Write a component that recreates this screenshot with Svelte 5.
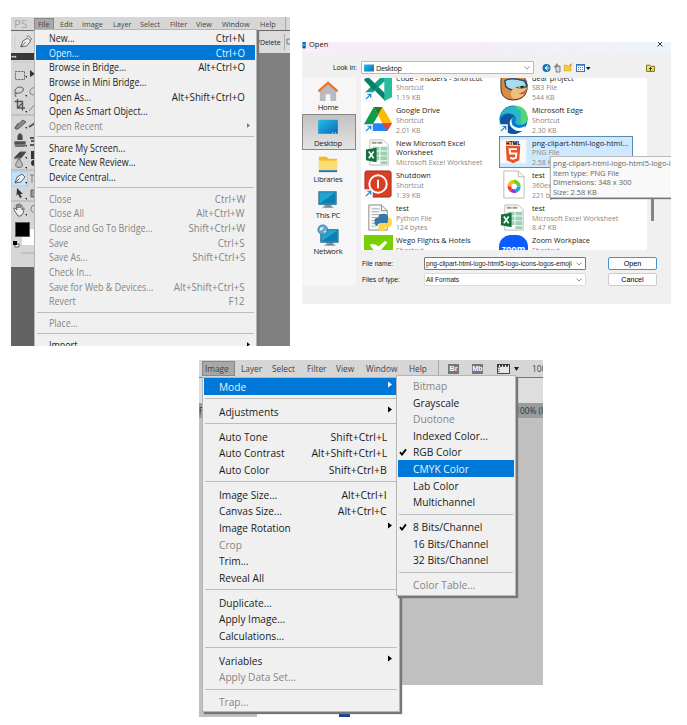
<script>
  const fileMenu = [
    ['New...', 'Ctrl+N'], ['Open...', 'Ctrl+O', 'hot'], ['Browse in Bridge...', 'Alt+Ctrl+O'],
    ['Browse in Mini Bridge...', ''], ['Open As...', 'Alt+Shift+Ctrl+O'],
    ['Open As Smart Object...', ''], ['Open Recent', '>', 'off'], null,
    ['Share My Screen...', ''], ['Create New Review...', ''], ['Device Central...', ''], null,
    ['Close', 'Ctrl+W', 'off'], ['Close All', 'Alt+Ctrl+W', 'off'],
    ['Close and Go To Bridge...', 'Shift+Ctrl+W', 'off'], ['Save', 'Ctrl+S', 'off'],
    ['Save As...', 'Shift+Ctrl+S', 'off'], ['Check In...', '', 'off'],
    ['Save for Web & Devices...', 'Alt+Shift+Ctrl+S', 'off'], ['Revert', 'F12', 'off'], null,
    ['Place...', '', 'off'], null, ['Import', '>']
  ];
  const imageMenu = [
    ['Mode', '>', 'hot'], null, ['Adjustments', '>'], null,
    ['Auto Tone', 'Shift+Ctrl+L'], ['Auto Contrast', 'Alt+Shift+Ctrl+L'], ['Auto Color', 'Shift+Ctrl+B'], null,
    ['Image Size...', 'Alt+Ctrl+I'], ['Canvas Size...', 'Alt+Ctrl+C'], ['Image Rotation', '>'],
    ['Crop', '', 'off'], ['Trim...', ''], ['Reveal All', ''], null,
    ['Duplicate...', ''], ['Apply Image...', ''], ['Calculations...', ''], null,
    ['Variables', '>'], ['Apply Data Set...', '', 'off'], null, ['Trap...', '', 'off']
  ];
  const modeMenu = [
    ['Bitmap', '', 'off'], ['Grayscale', ''], ['Duotone', '', 'off'], ['Indexed Color...', ''],
    ['RGB Color', '', 'checked'], ['CMYK Color', '', 'hot'], ['Lab Color', ''], ['Multichannel', ''], null,
    ['8 Bits/Channel', '', 'checked'], ['16 Bits/Channel', ''], ['32 Bits/Channel', ''], null,
    ['Color Table...', '', 'off']
  ];
  const left = [
    ['vscode', 'Code - Insiders - Shortcut', 'Shortcut', '1.19 KB'],
    ['drive', 'Google Drive', 'Shortcut', '2.01 KB'],
    ['excel', 'New Microsoft Excel', 'Worksheet', 'Microsoft Excel Worksheet'],
    ['power', 'Shutdown', 'Shortcut', '1.39 KB'],
    ['python', 'test', 'Python File', '124 bytes'],
    ['wego', 'Wego Flights & Hotels', 'Shortcut', '']
  ];
  const right = [
    ['bear', 'dear project', 'SB3 File', '544 KB'],
    ['edge', 'Microsoft Edge', 'Shortcut', '2.30 KB'],
    ['html', 'png-clipart-html-logo-html...', 'PNG File', '2.58 KB'],
    ['ring', 'test', '360extension', '221 bytes'],
    ['excel', 'test', 'Microsoft Excel Worksheet', '8.47 KB'],
    ['zoom', 'Zoom Workplace', 'Shortcut', '']
  ];
  const places = ['Home', 'Desktop', 'Libraries', 'This PC', 'Network'];
</script>

{#snippet menu(items)}
  {#each items as item}
    {#if item}
      <div class="item {item[2] ?? ''}">
        {#if item[2] === 'checked'}
          <svg class="check" viewBox="0 0 8 8"><path d="M1 4.2 3 6.6 7 1.4" /></svg>
        {/if}
        <span class="label">{item[0]}</span>
        {#if item[1] === '>'}
          <svg class="arrow" viewBox="0 0 4 6"><path d="M0 0 4 3 0 6z" /></svg>
        {:else}
          <span class="key">{item[1]}</span>
        {/if}
      </div>
    {:else}
      <div class="sep"></div>
    {/if}
  {/each}
{/snippet}

{#snippet link()}
  <rect x="0" y="20" width="9" height="9" fill="#fff" stroke="#ddd" stroke-width=".5" />
  <path d="M2 27 7 22M3.5 22H7v3.5" fill="none" stroke="#1683d8" stroke-width="1.2" />
{/snippet}

{#snippet fileIcon(kind)}
  <svg class="ficon" viewBox="0 0 30 30">
    {#if kind === 'vscode'}
      <path d="M0 7 4 4 25 24 22 29z" fill="#087f68" /><path d="M0 21 4 25 24 6 22 0z" fill="#10a384" />
      <path d="M0 7 4 4 14 14 10 18z" fill="#087f68" />
      <path d="M21 0 29 3V25L21 29z" fill="#27bda0" />{@render link()}
    {:else if kind === 'drive'}
      <path d="M10 2 0 20 5 27 15 10z" fill="#0a9d4b" /><path d="M10 2H19L29 19H19z" fill="#ffba00" />
      <path d="M10 2H19L14.500 10z" fill="#188038" />
      <path d="M10 19H29L24 27H5z" fill="#2684fc" /><path d="M19 19H29L24 27z" fill="#ea4335" />{@render link()}
    {:else if kind === 'excel'}
      <path d="M6 2H20L25 7V28H6z" fill="#fff" stroke="#bbb" />
      <path d="M8 4h5v2H8zM14 4h5v2h-5z" fill="#999" />
      <path d="M9 9h7v4H9zM17 9h7v4h-7zM9 14h7v4H9zM17 14h7v4h-7zM9 19h7v4H9zM17 19h7v4h-7zM17 24h7v3h-7z" fill="#9bd0b1" />
      <path d="M2 12 13 10V25L2 23z" fill="#14713f" />
      <path d="M5 14 10 21M10 14 5 21" stroke="#fff" stroke-width="1.7" />
    {:else if kind === 'power'}
      <rect x="1" y="1" width="27" height="27" rx="2" fill="#d83e24" stroke="#a62d1d" />
      <circle cx="14.5" cy="14.5" r="9" fill="none" stroke="#fff" stroke-width="2" />
      <path d="M14.5 10V19" stroke="#fff" stroke-width="2" />{@render link()}
    {:else if kind === 'python'}
      <path d="M5 2H18L24 8V28H5z" fill="#f8f8f8" stroke="#888" /><path d="M18 2V8H24" fill="none" stroke="#888" />
      <path d="M8 6h8M8 9h8M8 12h10M8 15h6M8 18h4M8 21h4M8 24h4" stroke="#aaa" />
      <path d="M15 14q0-3 5-3t5 3v5q0 2-3 2h-5q-3 0-3 3-4-1-3-6 0-3 4-3z" fill="#3676a8" />
      <path d="M25 15q4 0 4 5t-4 5h-3v3q-4 2-7 0v-4q0-3 4-3h4q2 0 2-2z" fill="#ffd64b" />
    {:else if kind === 'wego'}
      <rect width="30" height="30" fill="#78d000" /><path d="M6 10q5-2 9 2l7-6 2 2-6 7q0 5-3 8l-4-7q-3-2-5-6z" fill="#fff" />
    {:else if kind === 'bear'}
      <path d="M2 8q0-7 6-5 10-6 17 1 5 4 4 13-2 11-15 11Q1 27 2 14z" fill="#d98d43" stroke="#442b22" />
      <path d="M6 8q6-4 20 0l3 5q-5 5-10 2-6 5-12-1z" fill="#a9ddec" stroke="#284f72" stroke-width="1.5" />
      <path d="M15 15q9 2 14 0-2 11-13 12-7-4-1-12z" fill="#efbf80" /><path d="M20 21q6 0 8-5-1 8-8 5z" fill="#df2826" />
      <path d="m21 14 5-1-2 3z" fill="#171717" />
    {:else if kind === 'edge'}
      <circle cx="15" cy="15" r="14.5" fill="#087dca" />
      <path d="M1 12C4-2 29-3 29.500 14c0 7-10 9-13 4 5-9-9-13-15.500-6z" fill="#28b9c8" />
      <path d="M15 1q14-1 14.500 13 0 6-7 6V7q-2-4-7.500-6z" fill="#55d675" />
      <path d="M2 14q7-9 14-2-7 5-4 10 4 7 13 4Q14 34 5 26 0 20 2 14z" fill="#12539e" />
      <path d="M16 12q-5 3-2 9 5 5 13 1l-1 4q-9 3-14-4-3-6 4-10z" fill="#fff" />{@render link()}
    {:else if kind === 'html'}
      <rect x="1" y="2" width="27" height="24" fill="#fafafa" stroke="#eee" />
      <text x="14.500" y="7" text-anchor="middle" font-size="5" font-weight="900" fill="#111">HTML</text>
      <path d="M7 8H22L21 23 14.500 26 8 23z" fill="#e95325" />
      <path d="M18.500 11.500H11L11.500 16H18L17.500 20.500 14.500 21.500 11.500 20.500" fill="none" stroke="#fff" stroke-width="2" />
    {:else if kind === 'ring'}
      <path d="M5 1H20L26 7V29H5z" fill="#fff" stroke="#bbb" /><path d="M20 1V7H26" fill="none" stroke="#bbb" />
      <g fill="none" stroke-width="3.800"><path d="M10.700 17a5 5 0 0 1 5-5" stroke="#ffb900" /><path d="M15.500 12a5 5 0 0 1 5 5" stroke="#71ce25" /><path d="M20.500 17a5 5 0 0 1-3 4.500" stroke="#18a9df" /><path d="M17.500 21.500a5 5 0 0 1-5-.7" stroke="#a02de2" /><path d="M12.500 20.800a5 5 0 0 1-1.800-4" stroke="#f33542" /></g>
    {:else}
      <rect y="0" width="30" height="36" rx="12" fill="#0b5cff" />
      <text x="15" y="18" text-anchor="middle" font-size="9" font-weight="700" fill="#fff">zoom</text>
    {/if}
  </svg>
{/snippet}

{#snippet desk()}
  <defs><linearGradient id="sea" x2="1" y2="1"><stop stop-color="#25bfe9" /><stop offset="1" stop-color="#0869b8" /></linearGradient></defs>
  <rect x="2" y="5" width="21" height="15" rx=".7" fill="url(#sea)" /><path d="M17 19h1M20 19h1" stroke="#fff" />
{/snippet}

<main>
  <div class="top">
    <section class="ps">
      <div class="bar">
        <b class="logo">PS</b><span class="open">File</span><span>Edit</span><span>Image</span><span>Layer</span><span>Select</span><span>Filter</span><span>View</span><span>Window</span><span>Help</span><i></i>
      </div>
      <div class="options">
        <svg viewBox="0 0 24 24"><path d="M4 6v13" stroke="#bbb" stroke-dasharray="1 1" /><path d="m10 17 2-6 5-3 3 3-4 5zm0 0 5-5M16 7l1.500-1.500 3.500 3.500L19.500 10.500" fill="#eee" stroke="#555" stroke-width=".9" /></svg>
        <span>/Delete</span><em></em><svg class="mini" viewBox="0 0 4 8"><path d="M1 1h3M1 1v5h3" fill="none" stroke="#777" /></svg>
      </div>
      <div class="work">
        <div class="tools">
          <div class="head">◂◂</div>
          <svg viewBox="0 0 24 207" fill="none" stroke="#555" stroke-width=".9">
            <path d="M2 2H24" stroke="#bbb" stroke-dasharray="1 1" />
            <path d="M4.500 11.500h9v8h-9z" stroke-dasharray="2 1" /><path d="m19 10 5 4-5 3z" fill="#333" stroke="none" />
            <path d="M6 34q-3 0-2-4 2-4 6-3 4 1 2 4-2 3-7 2-2 1 0 4" /><path d="M24 28q-4-1-5 3t5 4" stroke="#777" />
            <path d="M6.500 39v9H14M3.500 41.500h8v9M6.500 48l5-5" stroke-width="1.400" /><path d="m18 51 6-7" stroke="#777" />
            <path d="M0 55H24M0 110H24M0 141H24" stroke="#aaa" />
            <path d="m4 67 8-7 3 2-8 7q-3 1-3-2z" fill="#888" /><path d="m4 69 3-6" /><path d="m18 67 6-4" stroke-width="2" />
            <path d="M7 80v-4q2-4 4 0v4M4 82h10v2H4zM4 86h10" fill="#444" stroke-width="1.300" /><path d="m19 78 5 0m-4 3h4m-5 4h5" stroke-width="2" />
            <path d="m3 98 6-6h6l-5 6z" fill="#444" /><path d="M3 98.500h7" stroke="#888" stroke-width="1.500" /><path d="M20 91h4v8h-4z" fill="#333" stroke="none" />
            <path d="M8 98.500q-7 9 0 9t0-9" fill="#bbb" stroke="#666" /><circle cx="23" cy="103" r="3" fill="#333" stroke="none" />
            <rect x=".5" y="112" width="16" height="14" fill="#c2e3fb" stroke="#9ed0ef" />
            <path d="m4 123 2-6 5-3 3 3-4 5zm0 0 4.500-4.500" fill="#eee" /><path d="M19 115h5m-3 0v8" stroke="#777" />
            <path d="m6 128 6 6-3 0 2 3-2 1-2-4-1.500 2z" fill="#333" stroke="none" /><path d="M20 130h4v7h-4z" fill="#999" />
            <path d="M5 153q-4-6-1-5l2 2-1-5q2-2 2 3 0-6 2-4v4q1-5 2-2v4q2-4 2-1 0 4-3 7H7z" fill="#eee" stroke="#555" /><path d="M24 145q-4 0-4 4t4 3" stroke="#777" />
            <path d="M14 16h2v2zM14 35h2v2zM14 51h2v2zM14 67h2v2zM14 85h2v2zM14 97h2v2zM14 107h2v2zM14 122h2v2zM14 138h2v2zM14 154h2v2z" fill="#222" stroke="none" />
            <rect x="11" y="169" width="13" height="16" fill="#fff" stroke="none" /><rect x="4.500" y="162.500" width="14" height="14" fill="#000" stroke="#555" />
            <path d="M4 184h4v3H4z" fill="#fff" /><path d="M2 181h4v4H2z" fill="#000" stroke="none" /><path d="M10 193H24" stroke="#aaa" />
          </svg>
        </div>
      </div>
      <div class="menu file">{@render menu(fileMenu)}</div>
    </section>

    <section class="dialog">
      <header><svg viewBox="0 0 5 10"><path d="M0 0h4v8H0z" fill="#075ca4" /><path d="M0 2h3v3H0z" fill="#31a8ff" /></svg><span>Open</span><svg class="x" viewBox="0 0 6 6"><path d="m.5.5 5 5m0-5-5 5" stroke="#222" stroke-width=".9" /></svg></header>
      <div class="look">
        <label for="where">Look in:</label>
        <div class="combo" id="where"><svg class="d" viewBox="2 5 21 15">{@render desk()}</svg><span>Desktop</span><svg class="chev" viewBox="0 0 6 4"><path d="m.5.5 2.500 2.500L5.500.5" /></svg></div>
        <svg class="nav" viewBox="0 0 110 12">
          <circle cx="6.500" cy="6" r="4" fill="#1673ad" /><path d="m8 3.500-3 2.500 3 2.500M5.500 6h4" fill="none" stroke="#fff" />
          <path d="M14 5h2v5h4V4h-3" fill="#ddd" stroke="#666" stroke-width=".8" /><path d="m14 5 3-4 2 4z" fill="#888" />
          <path d="M24 3h3l1 1h3v5h-7z" fill="#f5c944" stroke="#d7a52a" stroke-width=".5" /><path d="m29 3 3-2-1 4z" fill="#ed8a35" />
          <rect x="36.500" y="2.500" width="8" height="7" fill="#fff" stroke="#2c79c7" /><path d="M36 3h9" stroke="#2c79c7" stroke-width="1.500" /><path d="M38 5.500h5M38 7.500h5" stroke="#58a" stroke-dasharray="1 1" />
          <path d="M46 5h4.500L48.200 8z" fill="#111" />
        </svg>
        <svg class="fold" viewBox="0 0 8 7"><path d="M.5 1h3l1 1h3v4.500h-7z" fill="#f7e858" stroke="#685f19" stroke-width=".8" /><path d="M4 6V3M2.500 4.500 4 3l1.500 1.500" fill="none" stroke="#222" stroke-width=".8" /></svg>
      </div>
      <div class="middle">
        <div class="places">
          {#each places as place}
            <div class="place" class:chosen={place === 'Desktop'}>
              <svg viewBox="0 0 25 25">
                {#if place === 'Home'}
                  <path d="M4 12 12.500 4 21 12v11h-6v-7h-5v7H4z" fill="#b9bbc0" /><path d="M2.500 13 12.500 4l10 9" fill="none" stroke="#e8772f" stroke-width="2.500" />
                {:else if place === 'Desktop'}{@render desk()}
                {:else if place === 'Libraries'}
                  <path d="M3 6h8l2 2h9v13H3z" fill="#f4b928" /><path d="M3 10h19v11H3z" fill="#ffdc73" /><path d="M3 20h19v2H3z" fill="#1679c4" />
                {:else}
                  <g transform={place === 'Network' ? 'translate(2 2)' : ''}><path d="M9 18h7v3H9z" fill="#7c99aa" /><path d="M7 21h11" stroke="#60798a" /><rect x="3" y="5" width="18" height="13" fill="#20a5d2" stroke="#246888" /><path d="M4 17 20 6v11z" fill="#0b7fb6" /></g>
                  {#if place === 'Network'}<circle cx="7" cy="7" r="5" fill="#5aa7d1" stroke="#3c81ad" /><path d="m4 5 4-1-1 3-3 1zM8 8l3 0-2 3z" fill="#d1edf3" />{/if}
                {/if}
              </svg>
              <span>{place}</span>
            </div>
          {/each}
        </div>
        <div class="list">
          {#each [left, right] as col}
            <div class="col">
              {#each col as f}
                <div class="file-row" class:selected={f[0] === 'html'}>
                  {@render fileIcon(f[0])}
                  <div class="meta"><span>{f[1]}</span><span class:dim={f[2] !== 'Worksheet'}>{f[2]}</span><span class="dim">{f[3]}</span></div>
                </div>
              {/each}
            </div>
          {/each}
        </div>
        <div class="track"><div class="thumb"></div></div>
      </div>
      <div class="form">
        <span>File name:</span><div class="combo"><span>png-clipart-html-logo-html5-logo-icons-logos-emoji</span><svg class="chev" viewBox="0 0 6 4"><path d="m.5.5 2.500 2.500L5.500.5" /></svg></div><button class="primary">Open</button>
        <span>Files of type:</span><div class="combo second"><span>All Formats</span><svg class="chev" viewBox="0 0 6 4"><path d="m.5.5 2.500 2.500L5.500.5" /></svg></div><button>Cancel</button>
      </div>
      <div class="tip"><span>png-clipart-html-logo-html5-logo-icons</span><span>Item type: PNG File</span><span>Dimensions: 348 x 300</span><span>Size: 2.58 KB</span></div>
    </section>
  </div>

  <section class="img">
    <div class="bar">
      <i class="pad"></i><span class="open">Image</span><span>Layer</span><span>Select</span><span>Filter</span><span>View</span><span>Window</span><span>Help</span><i></i>
      <b class="chip">Br</b><b class="chip">Mb</b>
      <svg viewBox="0 0 24 12"><path d="M.5 1.500h12v9H.5z" fill="#e8e8e8" stroke="#444" /><path d="M0 2.500h13" stroke="#333" stroke-width="2.500" stroke-dasharray="2 1" /><path d="M2 4v7" stroke="#444" stroke-dasharray="1 1" /><path d="M17 4h5l-2.500 4z" fill="#222" /></svg>
      <span>100</span>
    </div>
    <div class="opts"></div>
    <div class="tabs"><span>F</span><span>100% (l</span></div>
    <div class="canvas"></div>
    <div class="foot"><div></div><b></b></div>
    <div class="menu image">{@render menu(imageMenu)}</div>
    <div class="menu mode">{@render menu(modeMenu)}</div>
  </section>
</main>

<style>
  :global(body) { background: #fff; }
  main { width: 687px; height: 725px; overflow: hidden; padding-top: 17px; box-sizing: border-box; font-family: "Open Sans", "Noto Sans", sans-serif; color: #1b1b1b; }
  main * { box-sizing: border-box; }
  span { white-space: nowrap; }
  .top { display: flex; gap: 12px; padding-left: 11px; height: 343px; align-items: flex-start; }
  section { position: relative; overflow: hidden; display: flex; flex-direction: column; }

  .ps { width: 279px; height: 329px; flex: none; }
  .bar { display: grid; align-items: center; background: #d6d6d6; color: #444; flex: none; }
  .ps .bar { height: 13px; font-size: 7.3px; grid-template-columns: 23px 26px 22px 31px 27px 30px 26px 26px 38px 25px 1px; }
  .ps .open { background: #a8a8a8; border: 1px solid #888; width: 20px; height: 12px; line-height: 10px; padding-left: 3px; }
  .logo { font: 11.500px/13px "Open Sans", sans-serif; color: #a5a5a5; padding-left: 3px; }
  .bar i { height: 100%; border-left: 1px solid #aaa; }
  .options { height: 23px; flex: none; display: flex; align-items: center; background: #dcdcdc; border-top: 1px solid #666; font-size: 7px; }
  .options > svg:first-child { width: 24px; height: 24px; margin-right: 222px; }
  .options span { letter-spacing: -.1px; width: 27px; margin-left: 1px; }
  .options em { height: 16px; border-left: 1px solid #aaa; }
  .options .mini { width: 4px; height: 8px; margin-left: 1px; }
  .work { flex: 1; background: linear-gradient(90deg, #626262 0 30px, #808080 30px); }
  .tools { width: 24px; height: 214px; background: #d6d6d6; }
  .head { height: 7px; background: #383838; color: #ddd; font: 5px/7px "DejaVu Sans", sans-serif; }
  .tools svg { display: block; width: 24px; height: 207px; }

  .menu { position: absolute; background: #f0f0f0; border: 1px solid #b5b5b5; box-shadow: 2px 2px 1px #777; }
  .item { display: flex; justify-content: space-between; align-items: center; position: relative; height: var(--row); }
  .item.off { color: #858585; }
  .item.hot { color: #e5f2ff; background: #0078d7; }
  .label { transform: scaleX(var(--squeeze)); transform-origin: left; }
  .key { transform: scaleX(var(--key)); transform-origin: right; }
  .arrow { width: 4px; height: 6px; fill: #000; }
  .hot .arrow { fill: #fff; }
  .off .arrow { fill: #777; }
  .sep { height: var(--gap); display: flex; align-items: center; margin: 0 1px; }
  .sep::after { content: ""; height: 1px; width: 100%; background: #bdbdbd; }
  .check { position: absolute; left: 1px; width: 8px; height: 8px; fill: none; stroke: #000; stroke-width: 1.800; }
  .file { --row: 14.680px; --gap: 7px; --squeeze: .89; --key: .975; left: 23px; top: 12px; width: 223px; height: 330px; padding: .500px 1px; font-size: 10px; }
  .file .item { padding: 0 10px 0 13px; }
  .file .arrow { margin-right: -5px; height: 5px; width: 3px; }

  .dialog { width: 369px; height: 262px; margin-top: 25px; background: #f0f0f0; font-size: 8px; }
  header { height: 11px; flex: none; display: flex; align-items: flex-start; background: linear-gradient(90deg, #f9edf6, #f5edf8 45%, #edf3fb); overflow: hidden; }
  header svg { width: 5px; height: 8px; }
  header span { font-size: 7.500px; line-height: 10px; margin-top: -3px; margin-left: 2px; flex: 1; }
  header .x { width: 6px; height: 6px; margin: -1px 8px 0 0; }
  .look { display: flex; align-items: center; height: 25px; flex: none; padding-top: 4px; }
  .look label { width: 59px; padding-left: 31px; font: 6.800px "Liberation Sans", sans-serif; white-space: nowrap; }
  .combo { display: flex; align-items: center; justify-content: space-between; background: #fff; border: 1px solid #b9b9b9; border-radius: 1px; height: 13px; padding: 0 3px 0 2px; font: 7.300px "Liberation Sans", sans-serif; }
  .look .combo { width: 173px; justify-content: flex-start; font: 7.300px "Open Sans", sans-serif; }
  .look .combo span { flex: 1; margin-left: 2px; letter-spacing: -.35px; }
  .d { width: 10px; height: 8px; }
  .chev { width: 6px; height: 4px; flex: none; fill: none; stroke: #777; stroke-width: .8; }
  .nav { width: 110px; height: 12px; margin-left: 6px; }
  .fold { width: 9px; height: 8px; margin-left: -4px; }
  .middle { display: flex; height: 208px; flex: none; margin-bottom: -29px; }
  .places { width: 54px; background: #f6f6f6; font-size: 7.700px; }
  .place { height: 36px; display: flex; flex-direction: column; align-items: center; justify-content: flex-end; line-height: 9px; padding: 0 2px 2.500px 0; letter-spacing: -.25px; }
  .place svg { width: 24px; height: 24px; }
  .chosen { background: linear-gradient(#c2c2c2, #e4e4e4); border: 1px solid #888; padding-bottom: 1.500px; }
  .list { margin-left: 5px; width: 286px; height: 172px; background: #fff; overflow: hidden; display: flex; }
  .col { width: 133px; margin-top: -7px; margin-left: 3px; }
  .col + .col { width: 138px; margin-left: 2px; }
  .file-row { display: flex; height: 32.600px; padding-top: 1.500px; width: 134px; }
  .selected { background: linear-gradient(#cde8ff, #cde8ff) 0 0 / 100% 31px no-repeat; outline: 1px solid #5b8caf; outline-offset: -1px; height: 31.600px; margin-bottom: 1px; }
  .ficon { width: 29px; height: 29px; flex: none; }
  .meta { display: flex; flex-direction: column; align-items: flex-start; width: 102px; padding-left: 3px; font-size: 8px; line-height: 9.750px; }
  .meta span { transform: scaleX(.92); transform-origin: left; }
  .col + .col .meta { padding-left: 4px; }
  .meta .dim { color: #888; transform: scaleX(.875); }
  .track { width: 7px; padding: 119px 0 0 4px; }
  .thumb { width: 3px; height: 24px; background: #858585; }
  .form { display: grid; grid-template-columns: 62px 162px 49px; row-gap: 3px; padding-left: 60px; align-items: center; position: relative; font: 6.700px "Liberation Sans", sans-serif; }
  .form .combo { font-size: 6.700px; border-color: #777; padding-left: 1px; }
  .form .combo span { letter-spacing: -.06px; }
  .form .second { border-color: #ddd; }
  .form button { width: 49px; height: 13px; margin-left: 22px; padding: 0; background: #fdfdfd; border: 1px solid #ccc; border-radius: 2px; font: 7.200px "Liberation Sans", sans-serif; }
  .form .primary { border-color: #4095d3; }
  .tip { position: absolute; left: 248px; top: 114px; width: 122px; height: 42px; display: flex; flex-direction: column; align-items: flex-start; padding: 1px 2px; background: #f9f9f9; border: 1px solid #bbb; box-shadow: 0 1px 1px #777; color: #646464; font-size: 8px; line-height: 9.700px; }
  .tip span { transform: scaleX(.935); transform-origin: left; }

  .img { width: 344px; height: 357px; margin-left: 199px; }
  .img .bar { height: 17px; font-size: 8.300px; grid-template-columns: 3px 39px 31px 35px 29px 30px 43px 29px 10px 24px 25px 35px 13px; }
  .img .open { background: #a8a8a8; border: 1px solid #888; width: 33px; height: 15px; line-height: 13px; padding-left: 2px; }
  .img .bar .pad { border: 0; }
  .img .bar svg { width: 24px; height: 12px; }
  .chip { width: 11px; height: 10px; background: #777; color: #fff; font: 700 7px/10px "Liberation Sans", sans-serif; text-align: center; border: 0; }
  .opts { height: 26px; flex: none; background: #dedede; border-top: 1px solid #777; }
  .tabs { height: 15px; flex: none; background: #9b9b9b; display: flex; justify-content: space-between; font-size: 8.300px; line-height: 15px; color: #333; }
  .canvas { flex: 1; background: #c0c0c0; }
  .foot { height: 32px; flex: none; display: flex; }
  .foot div { width: 58px; background: #c0c0c0; }
  .foot b { width: 11px; margin-left: 82px; background: #174499; }
  .image, .mode { --row: 16.620px; --gap: 8.300px; --squeeze: .882; --key: .91; font-size: 11.500px; }
  .image { left: 3px; top: 17px; width: 198px; height: 335px; padding: 0 1px; }
  .image .item { padding: 0 11px 0 14.500px; }
  .image .arrow { margin: -4px -5px 0 0; width: 4px; height: 7px; }
  .mode { --squeeze: .892; left: 197px; top: 15px; width: 120px; height: 221px; padding: 1.200px 1px; }
  .mode .item { padding-left: 15px; }
</style>
